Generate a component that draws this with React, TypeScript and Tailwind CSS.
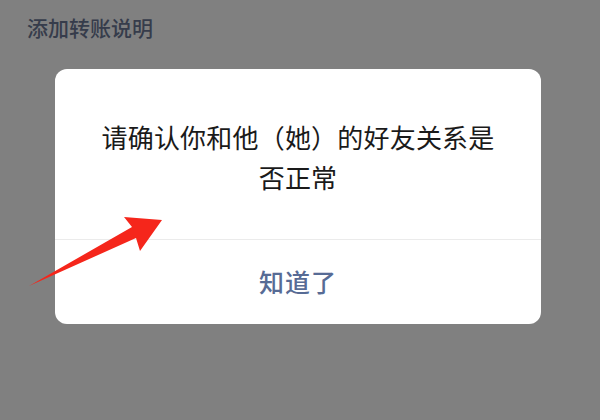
export default function App() {
  return (
    <div
      className="relative w-[600px] h-[420px] overflow-hidden bg-[#808080]"
      style={{ fontFamily: '"Noto Sans CJK SC", "Noto Sans", sans-serif' }}
    >
      {/* page behind the mask */}
      <div className="pl-[27px] pt-[13px] h-[69px] text-[21px] leading-[28px] font-medium text-[#363c4b]">
        添加转账说明
      </div>

      {/* dialog */}
      <div className="ml-[55px] w-[486px] h-[255px] rounded-[12px] bg-white flex flex-col overflow-hidden">
        <div className="h-[170px] flex items-center justify-center pt-[6px] text-center text-[26px] leading-[40px] tracking-[0.2px] text-[#1a1a1a]">
          <p>
            请确认你和他（她）的好友关系是
            <br />
            否正常
          </p>
        </div>
        <div className="h-px bg-[#ebebeb]" />
        <div className="flex-1 flex items-center justify-center text-[25px] tracking-[1px] font-medium text-[#576b95]">
          知道了
        </div>
      </div>

      {/* red annotation arrow */}
      <svg className="absolute left-0 top-0" width="600" height="420" viewBox="0 0 600 420">
        <polygon
          points="29,286 132,227 124,217 162,220 140,251 136,238"
          fill="#f5261b"
        />
      </svg>
    </div>
  );
}
